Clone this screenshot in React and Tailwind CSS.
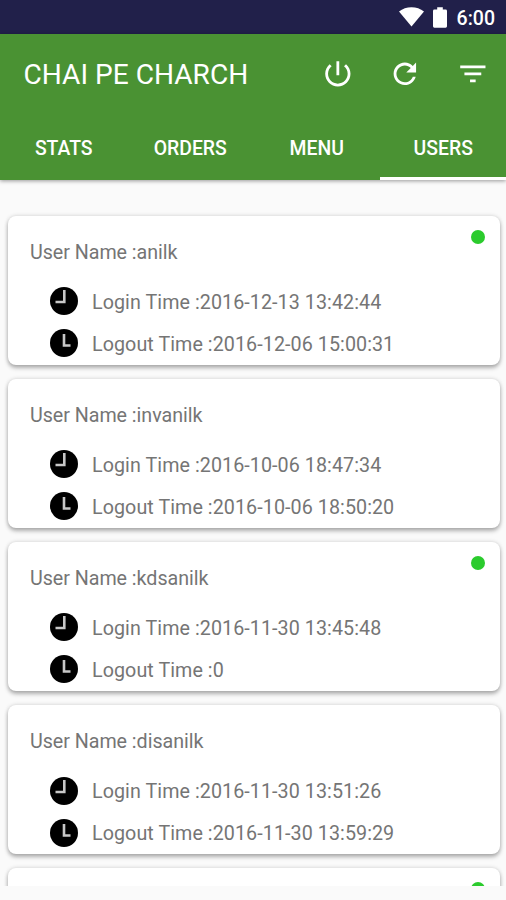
import React from 'react';

const tabs = ['STATS', 'ORDERS', 'MENU', 'USERS'];

const users = [
  { name: 'anilk', login: '2016-12-13 13:42:44', logout: '2016-12-06 15:00:31', online: true },
  { name: 'invanilk', login: '2016-10-06 18:47:34', logout: '2016-10-06 18:50:20', online: false },
  { name: 'kdsanilk', login: '2016-11-30 13:45:48', logout: '0', online: true },
  { name: 'disanilk', login: '2016-11-30 13:51:26', logout: '2016-11-30 13:59:29', online: false },
];

const cardClass =
  'relative h-[149px] shrink-0 rounded-[8px] bg-white shadow-[0_3px_4px_rgba(0,0,0,0.28),0_0_4px_rgba(0,0,0,0.16)]';

function StatusBar() {
  return (
    <div className="flex h-[34px] items-center justify-end bg-[#21204a] pr-[11px] text-white">
      <svg className="mr-[9px] h-[20px] w-[25px]" viewBox="0 0 25 20" fill="currentColor">
        <path d="M12.5 19.5 0 4.5C3.5 1.7 7.8 0.2 12.5 0.2S21.5 1.7 25 4.5z" />
      </svg>
      <svg className="mr-[10px] h-[21px] w-[14px]" viewBox="0 0 15 22" fill="currentColor">
        <path d="M4.5 0h6v2.5h3A1.5 1.5 0 0 1 15 4v16.5A1.5 1.5 0 0 1 13.5 22h-12A1.5 1.5 0 0 1 0 20.5V4A1.5 1.5 0 0 1 1.5 2.5h3z" />
      </svg>
      <span className="pt-[3px] text-[19.5px] font-medium leading-none">6:00</span>
    </div>
  );
}

function ToolbarIcon({ d }) {
  return (
    <svg className="size-[33.7px]" viewBox="0 0 24 24" fill="currentColor">
      <path d={d} />
    </svg>
  );
}

function Header() {
  return (
    <header className="relative h-[146px] bg-[#4a9233] text-white shadow-[0_1px_4px_rgba(0,0,0,0.4)]">
      <div className="flex h-[79px] items-center justify-between pl-[23.5px] pr-[16.5px]">
        <h1 className="pt-[3px] text-[28.1px] leading-none">CHAI PE CHARCH</h1>
        <div className="flex gap-[33.7px]">
          <ToolbarIcon d="M13 3h-2v10h2V3zm4.83 2.17l-1.42 1.42C17.99 7.86 19 9.81 19 12c0 3.87-3.13 7-7 7s-7-3.13-7-7c0-2.19 1.01-4.14 2.58-5.42L6.17 5.17C4.23 6.82 3 9.26 3 12c0 4.97 4.03 9 9 9s9-4.03 9-9c0-2.74-1.23-5.18-3.17-6.83z" />
          <ToolbarIcon d="M17.65 6.35C16.2 4.9 14.21 4 12 4c-4.42 0-7.99 3.58-7.99 8s3.57 8 7.99 8c3.73 0 6.84-2.55 7.73-6h-2.08c-.82 2.33-3.04 4-5.65 4-3.31 0-6-2.69-6-6s2.69-6 6-6c1.66 0 3.14.69 4.22 1.78L13 11h7V4l-2.35 2.35z" />
          <ToolbarIcon d="M10 18h4v-2h-4v2zM3 6v2h18V6H3zm3 7h12v-2H6v2z" />
        </div>
      </div>
      <nav className="grid h-[67px] grid-cols-4">
        {tabs.map((tab) => (
          <div
            key={tab}
            className={
              tab === 'USERS'
                ? 'flex items-center justify-center border-b-[3px] border-white pl-px pt-[7px] text-[19.4px] font-medium'
                : 'flex items-center justify-center pl-px pt-[4px] text-[19.4px] font-medium'
            }
          >
            {tab}
          </div>
        ))}
      </nav>
    </header>
  );
}

function Clock({ hands }) {
  return (
    <svg className="size-[28px] shrink-0" viewBox="0 0 28 28">
      <circle cx="14" cy="14" r="14" fill="#000" />
      <path d={hands} fill="none" stroke="#c8c8c8" strokeWidth="2.6" />
    </svg>
  );
}

function OnlineDot() {
  return <span className="absolute right-[14.5px] top-[14px] size-[14px] rounded-full bg-[#2bcb2d]" />;
}

function UserCard({ user }) {
  return (
    <div className={`${cardClass} pl-[22.5px] pt-[24px] text-[19.7px] text-[#757575]`}>
      {user.online && <OnlineDot />}
      <div className="h-[26px] leading-[26px] tracking-[-0.04px]">User Name :{user.name}</div>
      <div className="mt-[21.5px] flex h-[28px] items-center gap-[14px] pl-[19.5px]">
        <Clock hands="M14.3 3v12H5.5" />
        <span className="pl-[0.5px] pt-[3px] tracking-[0.07px]">Login Time :{user.login}</span>
      </div>
      <div className="mt-[14px] flex h-[28px] items-center gap-[14px] pl-[19.5px]">
        <Clock hands="M14 5v11.5h6.5" />
        <span className="pl-[0.5px] pt-[3px] tracking-[0.07px]">Logout Time :{user.logout}</span>
      </div>
    </div>
  );
}

function App() {
  return (
    <div className="h-[900px] w-[506px] overflow-hidden bg-[#fafafa] font-[Roboto,sans-serif]">
      <StatusBar />
      <Header />
      <main className="flex h-[706px] flex-col gap-[14.1px] overflow-hidden pl-[7.5px] pr-[6.5px] pt-[35.8px]">
        {users.map((user) => (
          <UserCard key={user.name} user={user} />
        ))}
        {/* next user, cut off at the end of the list */}
        <div className={cardClass}>
          <OnlineDot />
        </div>
      </main>
    </div>
  );
}

export default App;
